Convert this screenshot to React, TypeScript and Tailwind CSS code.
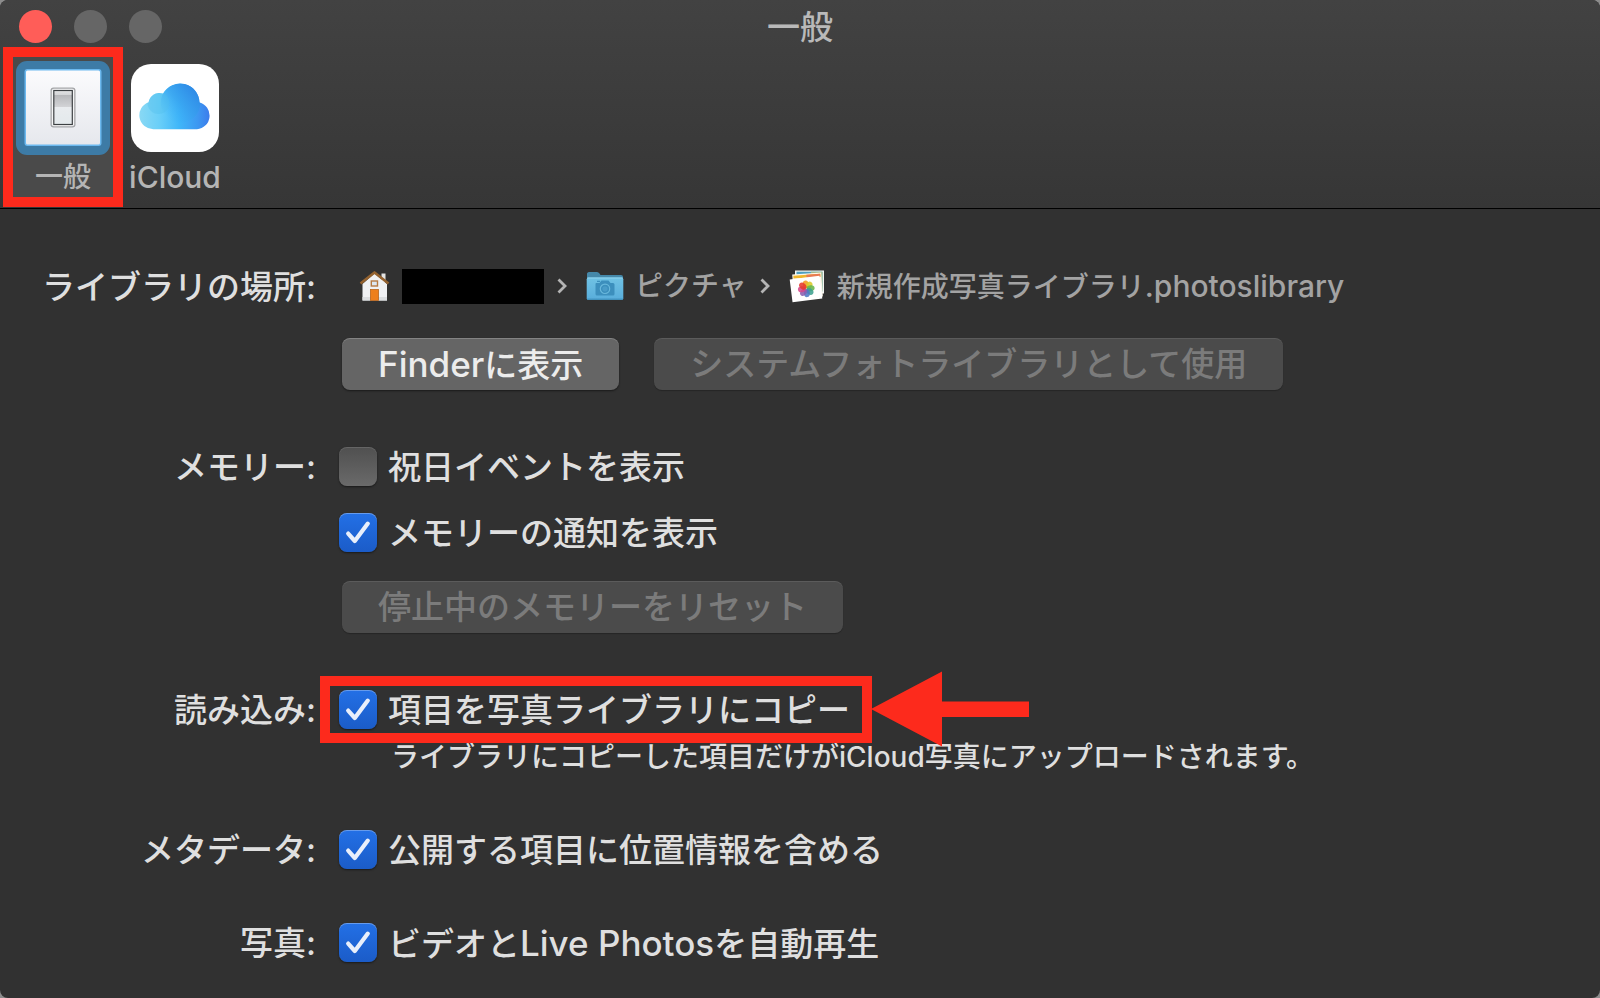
import type { ReactNode } from 'react';

const RED = '#fd2a1c';

function Tick() {
  return (
    <svg viewBox="0 0 38 39" className="pointer-events-none absolute inset-0 hidden h-full w-full peer-checked:block" aria-hidden="true">
      <path d="M9.2 20.6 L15.8 28 L28.8 10.6" fill="none" stroke="#e9effb" strokeWidth="4.2" strokeLinecap="round" strokeLinejoin="round" />
    </svg>
  );
}

function CheckRow({ id, checked = false, children }: { id: string; checked?: boolean; children: ReactNode }) {
  return (
    <div className="flex h-10 items-center gap-[11px]">
      <span className="relative h-[39px] w-[38px] shrink-0">
        <input
          id={id}
          type="checkbox"
          defaultChecked={checked}
          className="peer block h-full w-full appearance-none rounded-lg bg-linear-to-b from-[#505050] to-[#6a6a6a] shadow-[0_1px_2px_rgba(0,0,0,0.5),inset_0_1px_0_rgba(255,255,255,0.12)] checked:from-[#2370e6] checked:to-[#1b5cc8] checked:shadow-[0_1px_2px_rgba(0,0,0,0.5),inset_0_1px_0_rgba(255,255,255,0.3)]"
        />
        <Tick />
      </span>
      <label htmlFor={id} className="pt-0.5 whitespace-nowrap">
        {children}
      </label>
    </div>
  );
}

function Section({ title, className, children }: { title: string; className: string; children: ReactNode }) {
  return (
    <section className={`grid grid-cols-[316px_1fr] gap-x-[23px] ${className}`}>
      <h2 className="flex h-10 items-center justify-end pt-0.5 font-medium whitespace-nowrap">{title}</h2>
      <div className="relative">{children}</div>
    </section>
  );
}

function PushButton({ disabled = false, children }: { disabled?: boolean; children: ReactNode }) {
  return (
    <button
      type="button"
      disabled={disabled}
      className="flex h-[52px] items-center justify-center rounded-lg bg-[#656565] px-[36px] whitespace-nowrap text-[#ececec] shadow-[0_1px_2px_rgba(0,0,0,0.5),inset_0_1px_0_rgba(255,255,255,0.2)] disabled:bg-[#4b4b4b] disabled:text-[#7b7b7b] disabled:shadow-[0_1px_1px_rgba(0,0,0,0.25),inset_0_1px_0_rgba(255,255,255,0.09)]"
    >
      <span>{children}</span>
    </button>
  );
}

function SwitchIcon() {
  return (
    <svg viewBox="0 0 94 94" className="h-[94px] w-[94px]" aria-hidden="true">
      <defs>
        <linearGradient id="plate" x1="0" y1="0" x2="0" y2="1">
          <stop offset="0" stopColor="#fbfbfd" />
          <stop offset="1" stopColor="#e6e8ed" />
        </linearGradient>
        <linearGradient id="rocker" x1="0" y1="0" x2="0" y2="1">
          <stop offset="0" stopColor="#e4e5e7" />
          <stop offset="0.12" stopColor="#d5d6d8" />
          <stop offset="0.14" stopColor="#b7b8bb" />
          <stop offset="0.48" stopColor="#d2d3d6" />
          <stop offset="0.5" stopColor="#e9ecef" />
          <stop offset="1" stopColor="#e3e9ec" />
        </linearGradient>
      </defs>
      <rect width="94" height="94" rx="11" fill="#3d7ba6" />
      <rect x="8.5" y="8" width="77" height="77" rx="3" fill="#6cb9ef" />
      <rect x="10" y="9.5" width="74" height="74" rx="1.5" fill="url(#plate)" />
      <rect x="34.5" y="26.5" width="25" height="40" rx="3" fill="#a4a5a8" />
      <rect x="35.8" y="27.8" width="22.4" height="37.4" rx="2" fill="#f4f5f6" />
      <rect x="37.8" y="29.5" width="18.5" height="34" fill="url(#rocker)" stroke="#3c4043" strokeWidth="1.2" />
    </svg>
  );
}

function CloudIcon() {
  return (
    <svg viewBox="0 0 88 88" className="h-[88px] w-[88px]" aria-hidden="true">
      <defs>
        <linearGradient id="cloud" x1="0" y1="0" x2="1" y2="0">
          <stop offset="0" stopColor="#8bd9f4" />
          <stop offset="0.28" stopColor="#6acff8" />
          <stop offset="0.55" stopColor="#3fb6f9" />
          <stop offset="0.8" stopColor="#3d97f1" />
          <stop offset="1" stopColor="#3b74ea" />
        </linearGradient>
        <linearGradient id="dome" x1="0.1" y1="0.8" x2="0.8" y2="0.1">
          <stop offset="0" stopColor="#3bb3fb" stopOpacity="0" />
          <stop offset="0.5" stopColor="#36a0ee" stopOpacity="0.7" />
          <stop offset="1" stopColor="#2f8be6" />
        </linearGradient>
        <clipPath id="cloudClip">
          <path d="M22.5 65.2 A13.9 13.9 0 0 1 17.6 38.2 A11 11 0 0 1 32 29.5 A19.5 19.5 0 0 1 68.5 38.5 A13.6 13.6 0 0 1 66 65.2 Z" />
        </clipPath>
      </defs>
      <rect width="88" height="88" rx="20" fill="#ffffff" />
      <g clipPath="url(#cloudClip)">
        <rect x="7" y="18" width="75" height="48" fill="url(#cloud)" />
        <circle cx="49.5" cy="39" r="19.8" fill="url(#dome)" />
        <circle cx="27.5" cy="39" r="11" fill="#4fbdec" opacity="0.35" />
      </g>
    </svg>
  );
}

function HouseIcon() {
  return (
    <svg viewBox="0 0 32 32" className="h-8 w-8 shrink-0" aria-hidden="true">
      <rect x="22.5" y="3.5" width="4" height="9" fill="#e3e3e3" />
      <path d="M3.5 14 L15.5 3.5 L28 14 V30.5 H3.5 Z" fill="#f0f1f3" />
      <path d="M3.5 27 H28 V30.5 H3.5 Z" fill="#dcdee0" />
      <path d="M1.5 13.5 L15.5 2.4 L29.5 13.5" fill="none" stroke="#94622f" strokeWidth="2.6" strokeLinejoin="round" />
      <rect x="12.3" y="11" width="6.2" height="5" fill="#dce7f2" stroke="#b57a43" strokeWidth="1.4" />
      <rect x="11.5" y="19.5" width="8" height="11" fill="#ee7f1c" stroke="#b9651d" strokeWidth="0.8" />
    </svg>
  );
}

function FolderIcon() {
  return (
    <svg viewBox="0 0 38 30" className="h-[30px] w-[38px] shrink-0" aria-hidden="true">
      <defs>
        <linearGradient id="folder" x1="0" y1="0" x2="0" y2="1">
          <stop offset="0" stopColor="#70c2e4" />
          <stop offset="1" stopColor="#58addb" />
        </linearGradient>
      </defs>
      <path d="M1 2.5 A2 2 0 0 1 3 1 H11 Q12.5 1 13.5 2.5 L14.5 4 H35 Q37 4 37 6 V12 H1 Z" fill="#4588a9" />
      <rect x="0.7" y="6.5" width="36.6" height="22.5" rx="1.8" fill="url(#folder)" />
      <rect x="1.4" y="6.5" width="35.2" height="1" fill="#92d6f0" />
      <rect x="1.2" y="27.6" width="35.6" height="1.3" fill="#3f8fbb" />
      <path d="M10 12 H13.5 L15.5 9.5 H22.5 L24.5 12 H27 Q28.5 12 28.5 13.5 V23 Q28.5 24.5 27 24.5 H11 Q9.5 24.5 9.5 23 V13.5 Q9.5 12 10 12 Z M11 9.8 H14 V11 H11 Z" fill="#3c8fbd" />
      <circle cx="19" cy="17.8" r="4.7" fill="none" stroke="#69b8dc" strokeWidth="1.2" />
      <circle cx="19" cy="17.8" r="2.6" fill="#4a9cc8" />
    </svg>
  );
}

const PETALS = ['#f59a1f', '#d9c92a', '#67b54a', '#3fa08f', '#4c79c4', '#8a5fb0', '#d6478a', '#e5392d'];

function LibraryIcon() {
  return (
    <svg viewBox="0 0 36 34" className="h-[34px] w-9 shrink-0" aria-hidden="true">
      <g>
        <rect x="6" y="1.5" width="29" height="23" fill="#f5f6f2" />
        <rect x="7.5" y="2.7" width="26" height="20" fill="#4e9fc0" />
        <path d="M22 2.7 H33.5 V22 H31 V5 H22 Z" fill="#a3b98a" />
      </g>
      <g transform="rotate(-4 18 16)">
        <rect x="4" y="4.6" width="29" height="24" fill="#fbf6ea" />
        <path d="M5 5.8 H32 V8.6 H5 Z" fill="#f0b62c" />
        <path d="M18 5.8 H32 V8.6 H18 Z" fill="#e87a52" />
      </g>
      <g transform="rotate(-7 17 20)">
        <rect x="2" y="8.5" width="30" height="23" fill="#ffffff" />
        <g transform="translate(17.3 19.8)">
          {PETALS.map((color, i) => (
            <ellipse key={color} cx="0" cy="-4.4" rx="3" ry="4" fill={color} opacity="0.88" transform={`rotate(${i * 45})`} />
          ))}
        </g>
      </g>
    </svg>
  );
}

function Chevron() {
  return (
    <svg viewBox="0 0 12 18" className="h-[18px] w-3 shrink-0" aria-hidden="true">
      <path d="M2.5 2.5 L9 9 L2.5 15.5" fill="none" stroke="#b4b4b4" strokeWidth="2.8" />
    </svg>
  );
}

function Arrow() {
  return (
    <svg viewBox="0 0 158 76" className="absolute top-[-18px] left-[532px] h-[76px] w-[158px]" aria-hidden="true">
      <path d="M0 38 L71 0.5 V30.5 H158 V46 H71 V75.5 Z" fill={RED} />
    </svg>
  );
}

export default function App() {
  return (
    <div className="min-h-screen bg-[#8c8c8c]">
      <div className="flex min-h-screen flex-col overflow-hidden rounded-lg bg-[#313131] font-[Inter,'Noto_Sans_CJK_JP',sans-serif] text-[33px] leading-10 font-medium text-[#dfdfdf]">
        <header className="border-b border-black bg-linear-to-b from-[#424242] to-[#363636]">
          <div className="grid h-[47px] grid-cols-[1fr_auto_1fr] items-center px-[19px] pt-[5px]">
            <div className="flex gap-[22px]">
              <button type="button" aria-label="閉じる" className="h-[33px] w-[33px] rounded-full bg-[#ff5d58]" />
              <button type="button" aria-label="しまう" disabled className="h-[33px] w-[33px] rounded-full bg-[#666666]" />
              <button type="button" aria-label="拡大" disabled className="h-[33px] w-[33px] rounded-full bg-[#666666]" />
            </div>
            <h1 className="pt-0.5 font-medium text-[#b9b9b9]">一般</h1>
          </div>
          <nav className="flex gap-2 pb-px pl-[3px] text-[28px] leading-8 text-[#b5b5b5]">
            <button type="button" aria-pressed="true" className="flex h-40 w-[120px] flex-col items-center gap-[6px] border-10 border-[#fd2a1c] bg-[#4a4a4a] pt-1">
              <SwitchIcon />
              <span>一般</span>
            </button>
            <button type="button" className="flex h-40 w-[88px] flex-col items-center gap-[9px] pt-[17px]">
              <CloudIcon />
              <span className="text-[30px]">iCloud</span>
            </button>
          </nav>
        </header>

        <main className="pb-9">
          <Section title="ライブラリの場所:" className="mt-[57px]">
            <div className="flex h-10 items-center pl-5 text-[28px] text-[#a3a3a3]">
              <HouseIcon />
              <span className="ml-[11px] h-[35px] w-[142px] bg-black" />
              <span className="ml-3">
                <Chevron />
              </span>
              <span className="ml-[18px]">
                <FolderIcon />
              </span>
              <span className="ml-[11px] whitespace-nowrap">ピクチャ</span>
              <span className="ml-3">
                <Chevron />
              </span>
              <span className="ml-[18px]">
                <LibraryIcon />
              </span>
              <span className="ml-3 whitespace-nowrap">
                新規作成写真ライブラリ<span className="text-[30px]">.photoslibrary</span>
              </span>
            </div>
            <div className="mt-8 flex gap-[35px] pl-[3px]">
              <PushButton>
                <span className="text-[35px]">Finder</span>に表示
              </PushButton>
              <PushButton disabled>システムフォトライブラリとして使用</PushButton>
            </div>
          </Section>

          <Section title="メモリー:" className="mt-14">
            <CheckRow id="holiday">祝日イベントを表示</CheckRow>
            <div className="mt-[26px]">
              <CheckRow id="notify" checked>
                メモリーの通知を表示
              </CheckRow>
            </div>
            <div className="mt-[29px] flex pl-[3px]">
              <PushButton disabled>停止中のメモリーをリセット</PushButton>
            </div>
          </Section>

          <Section title="読み込み:" className="mt-14">
            <CheckRow id="copy" checked>
              項目を写真ライブラリにコピー
            </CheckRow>
            <p className="mt-3 pl-[52px] text-[28px] leading-8 whitespace-nowrap">
              ライブラリにコピーした項目だけがiCloud写真にアップロードされます。
            </p>
            <div className="pointer-events-none absolute top-[-13px] left-[-19px] h-[67px] w-[552px] border-10 border-[#fd2a1c]" />
            <Arrow />
          </Section>

          <Section title="メタデータ:" className="mt-14">
            <CheckRow id="location" checked>
              公開する項目に位置情報を含める
            </CheckRow>
          </Section>

          <Section title="写真:" className="mt-[53px]">
            <CheckRow id="autoplay" checked>
              ビデオと<span className="text-[35px]">Live Photos</span>を自動再生
            </CheckRow>
          </Section>
        </main>
      </div>
    </div>
  );
}
